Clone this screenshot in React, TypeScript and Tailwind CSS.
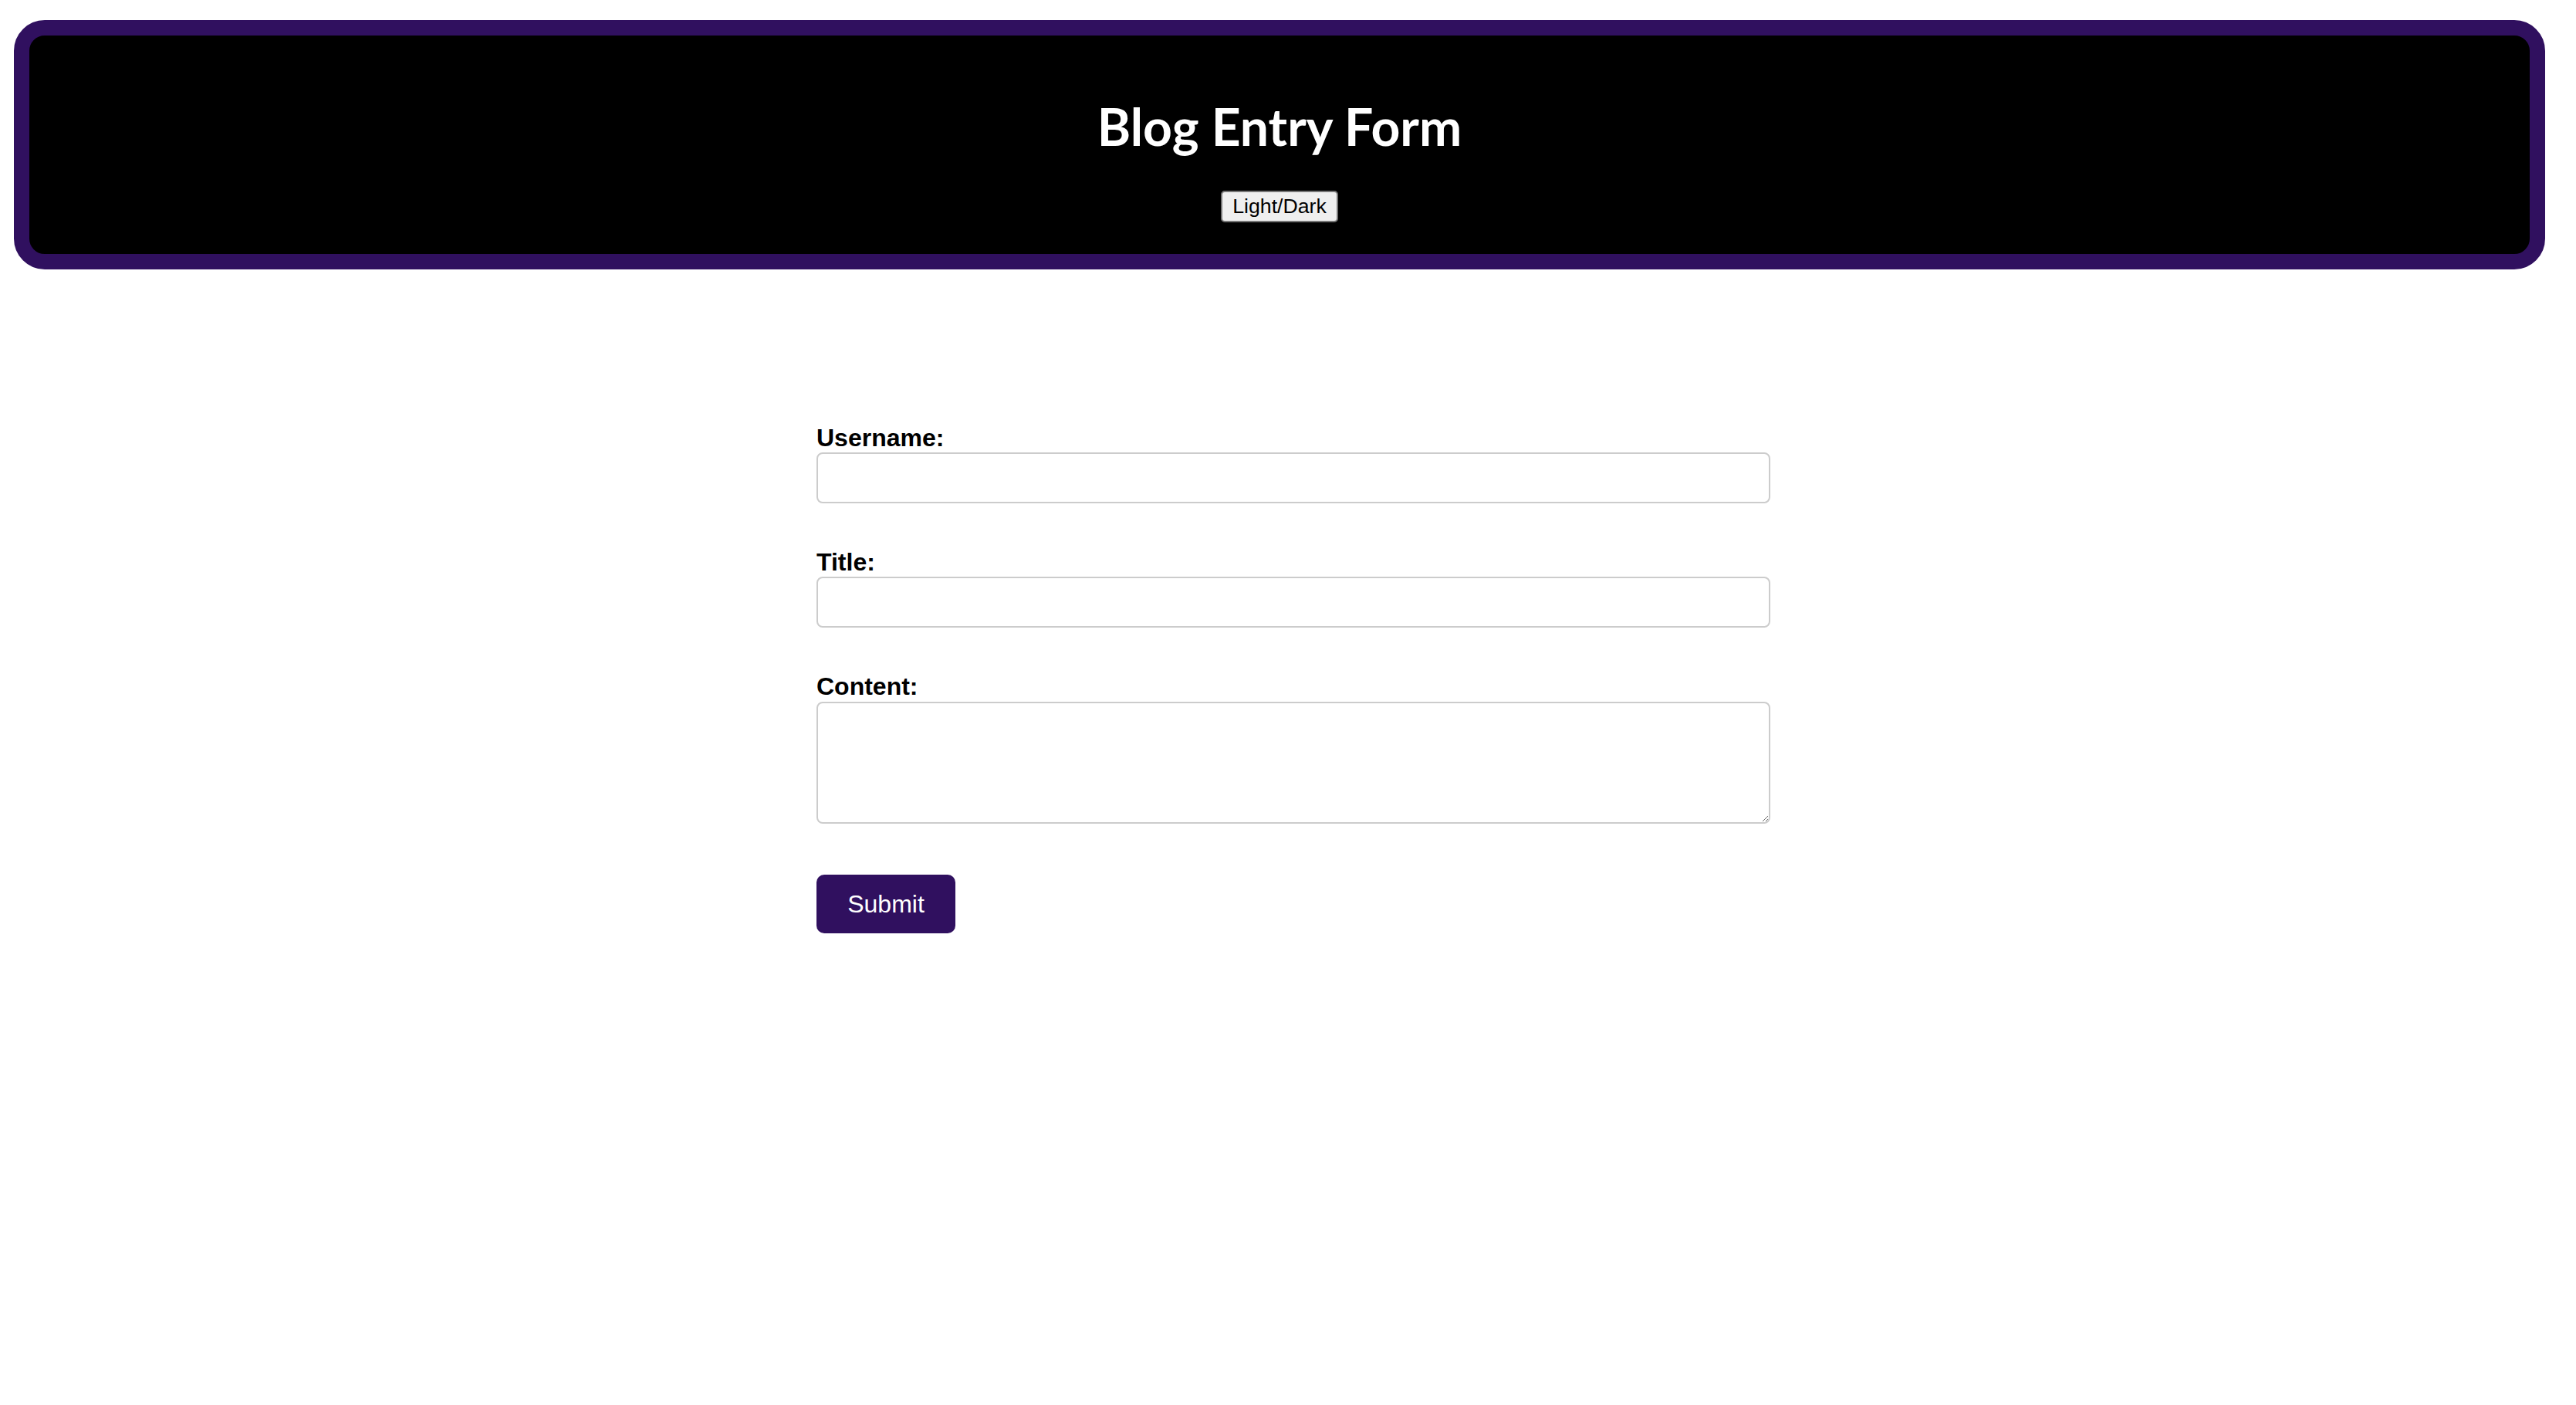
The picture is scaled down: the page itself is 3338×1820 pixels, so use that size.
import { useState } from 'react';

const fields = [
  { id: 'username', label: 'Username:' },
  { id: 'title', label: 'Title:' },
];

export default function App() {
  const [dark, setDark] = useState(false);

  return (
    <div
      className={`min-h-screen pt-[26px] ${dark ? 'bg-[#121212] text-white' : 'bg-white text-black'}`}
      style={{ fontFamily: '"Liberation Sans", Arial, sans-serif' }}
    >
      <header className="ml-[18px] mr-[40px] rounded-[40px] border-[20px] border-[#30105f] bg-black pt-[78px] pb-[41px] flex flex-col items-center">
        <h1 className="font-['Lato',sans-serif] text-[66px] font-bold leading-[1.2] text-white">
          Blog Entry Form
        </h1>
        <button
          type="button"
          onClick={() => setDark(!dark)}
          className="mt-[44px] h-[41px] w-[152px] rounded-[5px] border-2 border-[#767676] bg-[#efefef] text-[26.67px] leading-none text-black"
        >
          Light/Dark
        </button>
      </header>

      <div className="ml-[18px] mr-[40px]">
        <form className="mx-auto mt-[200px] flex w-[1200px] flex-col items-start">
          {fields.map((f) => (
            <div key={f.id} className="mb-[58px] flex flex-col">
              <label htmlFor={f.id} className="text-[32px] font-bold leading-[37px]">
                {f.label}
              </label>
              <input
                id={f.id}
                type="text"
                className="h-[66px] w-[1236px] rounded-[8px] border-2 border-[#cccccc] bg-white px-[16px] text-[32px]"
              />
            </div>
          ))}
          <div className="flex flex-col">
            <label htmlFor="content" className="text-[32px] font-bold leading-[37px]">
              Content:
            </label>
            <textarea
              id="content"
              className="mt-[1px] h-[158px] w-[1236px] resize rounded-[8px] border-2 border-[#cccccc] bg-white p-[16px] text-[32px]"
            />
          </div>
          <button
            type="submit"
            className="mt-[66px] h-[76px] w-[180px] rounded-[10px] bg-[#30105f] text-[32px] text-white"
          >
            Submit
          </button>
        </form>
      </div>
    </div>
  );
}
